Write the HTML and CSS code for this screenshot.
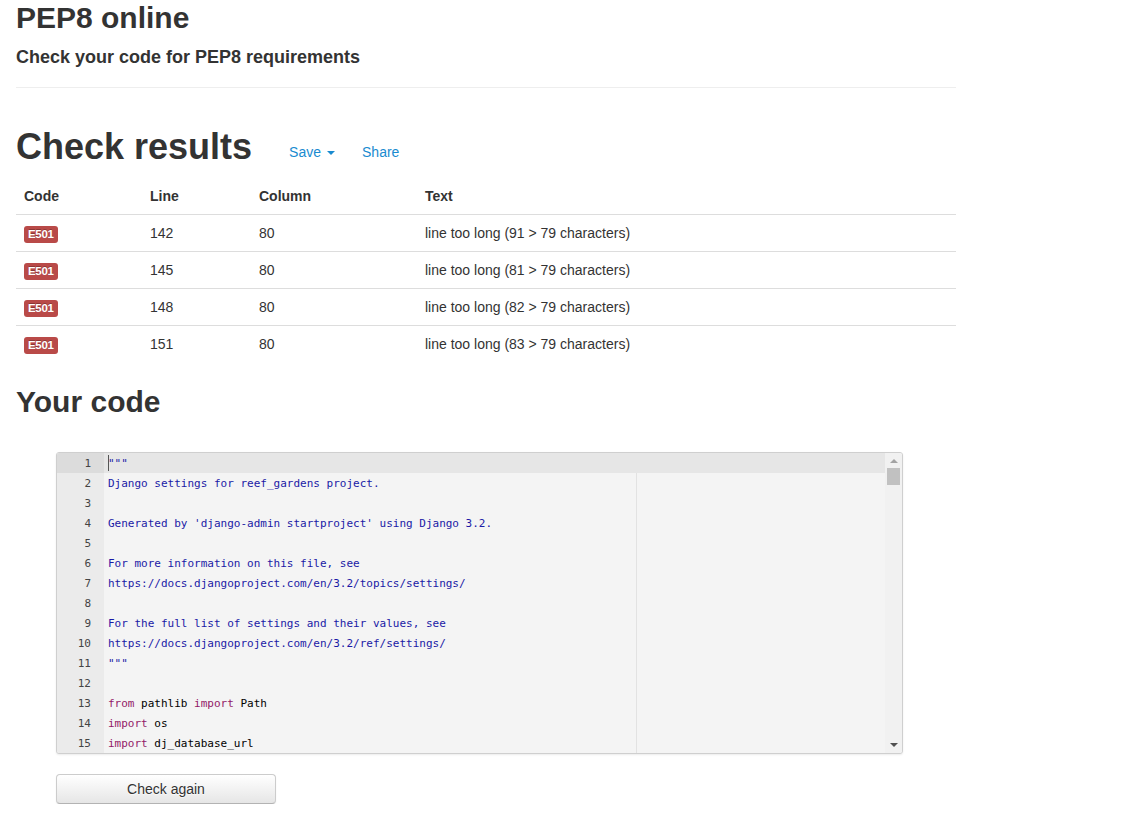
FILE: index.html
```html
<!DOCTYPE html>
<html lang="en">
<head>
<meta charset="utf-8">
<title>PEP8 online</title>
<link rel="stylesheet" href="styles.css">
</head>
<body>
<div class="container">
  <h2 class="site-title">PEP8 online</h2>
  <h4 class="subtitle">Check your code for PEP8 requirements</h4>
  <hr class="divider">

  <div class="results-head">
    <h1 class="results-title">Check results</h1>
    <div class="results-actions">
      <a class="action-link" href="#">Save<span class="caret"></span></a>
      <a class="action-link share" href="#">Share</a>
    </div>
  </div>

  <table class="results-table">
    <thead>
      <tr>
        <th class="col-code">Code</th>
        <th class="col-line">Line</th>
        <th class="col-column">Column</th>
        <th class="col-text">Text</th>
      </tr>
    </thead>
    <tbody>
      <tr><td><span class="label-error">E501</span></td><td>142</td><td>80</td><td>line too long (91 &gt; 79 characters)</td></tr>
      <tr><td><span class="label-error">E501</span></td><td>145</td><td>80</td><td>line too long (81 &gt; 79 characters)</td></tr>
      <tr><td><span class="label-error">E501</span></td><td>148</td><td>80</td><td>line too long (82 &gt; 79 characters)</td></tr>
      <tr><td><span class="label-error">E501</span></td><td>151</td><td>80</td><td>line too long (83 &gt; 79 characters)</td></tr>
    </tbody>
  </table>

  <h2 class="code-title">Your code</h2>

  <div class="code-area">
    <div class="editor">
      <div class="gutter">
        <div class="gutter-cell active">1</div>
        <div class="gutter-cell">2</div>
        <div class="gutter-cell">3</div>
        <div class="gutter-cell">4</div>
        <div class="gutter-cell">5</div>
        <div class="gutter-cell">6</div>
        <div class="gutter-cell">7</div>
        <div class="gutter-cell">8</div>
        <div class="gutter-cell">9</div>
        <div class="gutter-cell">10</div>
        <div class="gutter-cell">11</div>
        <div class="gutter-cell">12</div>
        <div class="gutter-cell">13</div>
        <div class="gutter-cell">14</div>
        <div class="gutter-cell">15</div>
      </div>
      <div class="code">
        <div class="print-margin"></div>
        <div class="code-line active"><span class="cursor"></span><span class="str">"""</span></div>
        <div class="code-line"><span class="str">Django settings for reef_gardens project.</span></div>
        <div class="code-line"></div>
        <div class="code-line"><span class="str">Generated by 'django-admin startproject' using Django 3.2.</span></div>
        <div class="code-line"></div>
        <div class="code-line"><span class="str">For more information on this file, see</span></div>
        <div class="code-line"><span class="str">https://docs.djangoproject.com/en/3.2/topics/settings/</span></div>
        <div class="code-line"></div>
        <div class="code-line"><span class="str">For the full list of settings and their values, see</span></div>
        <div class="code-line"><span class="str">https://docs.djangoproject.com/en/3.2/ref/settings/</span></div>
        <div class="code-line"><span class="str">"""</span></div>
        <div class="code-line"></div>
        <div class="code-line"><span class="kw">from</span> pathlib <span class="kw">import</span> Path</div>
        <div class="code-line"><span class="kw">import</span> os</div>
        <div class="code-line"><span class="kw">import</span> dj_database_url</div>
      </div>
      <div class="scrollbar">
        <span class="arrow-up"></span>
        <span class="thumb"></span>
        <span class="track"></span>
        <span class="arrow-down"></span>
      </div>
    </div>

    <button class="btn-check" type="button">Check again</button>
  </div>
</div>
</body>
</html>
```

FILE: styles.css
```css
html, body {
  margin: 0;
  padding: 0;
  background: #fff;
}

body {
  font-family: "Liberation Sans", Arial, Helvetica, sans-serif;
  font-size: 14px;
  line-height: 20px;
  color: #333;
}

.container {
  width: 940px;
  padding-left: 16px;
}

.site-title {
  margin: 0;
  padding-top: 1px;
  font-size: 30px;
  line-height: 34px;
  font-weight: bold;
  color: #333;
}

.subtitle {
  margin: 12px 0 0;
  font-size: 18px;
  line-height: 20px;
  font-weight: bold;
  color: #333;
}

.divider {
  margin: 20px 0 0;
  border: 0;
  border-top: 1px solid #eee;
  border-bottom: 1px solid #fff;
  height: 0;
}

.results-head {
  display: flex;
  align-items: flex-end;
  margin-top: 38px;
}

.results-title {
  margin: 0;
  font-size: 36px;
  line-height: 40px;
  font-weight: bold;
  color: #333;
}

.results-actions {
  display: flex;
  align-items: center;
  margin-left: 37px;
  margin-bottom: 5px;
}

.action-link {
  color: #1a8bd0;
  text-decoration: none;
  font-size: 14px;
  line-height: 20px;
  display: flex;
  align-items: center;
}

.caret {
  display: inline-block;
  width: 0;
  height: 0;
  margin-left: 6px;
  margin-top: 1px;
  border-top: 4px solid #1a8bd0;
  border-left: 4px solid transparent;
  border-right: 4px solid transparent;
}

.share {
  margin-left: 27px;
}

.results-table {
  width: 940px;
  border-collapse: collapse;
  border-spacing: 0;
  margin-top: 11px;
  margin-bottom: 20px;
}

.results-table th,
.results-table td {
  padding: 8px;
  line-height: 20px;
  text-align: left;
  vertical-align: top;
}

.results-table th {
  font-weight: bold;
  vertical-align: bottom;
}

.results-table td {
  border-top: 1px solid #ddd;
}

.col-code { width: 110px; }
.col-line { width: 93px; }
.col-column { width: 150px; }

.label-error {
  display: inline-block;
  padding: 2px 4px;
  font-size: 11.5px;
  font-weight: bold;
  line-height: 13px;
  color: #fff;
  background-color: #b94a48;
  border-radius: 3px;
  text-shadow: 0 -1px 0 rgba(0, 0, 0, 0.25);
  vertical-align: baseline;
  white-space: nowrap;
  letter-spacing: -0.3px;
}

.code-title {
  margin: 0;
  font-size: 30px;
  line-height: 40px;
  font-weight: bold;
  color: #333;
}

.code-area {
  padding-left: 40px;
  padding-top: 30px;
}

.editor {
  display: flex;
  width: 845px;
  height: 300px;
  border: 1px solid #cfcfcf;
  border-radius: 3px;
  box-shadow: 0 1px 2px rgba(0, 0, 0, 0.08);
  background: #f4f4f4;
  overflow: hidden;
  font-family: "DejaVu Sans Mono", "Liberation Mono", monospace;
  font-size: 11px;
  line-height: 20px;
}

.gutter {
  width: 47px;
  flex: none;
  background: #ebebeb;
  color: #444;
}

.gutter-cell {
  height: 20px;
  text-align: right;
  padding-right: 13px;
  padding-top: 1px;
  box-sizing: border-box;
}

.gutter-cell.active {
  background: #dcdcdc;
}

.code {
  position: relative;
  flex: 1;
  color: #000;
}

.print-margin {
  position: absolute;
  top: 0;
  bottom: 0;
  left: 532px;
  width: 1px;
  background: #e2e2e2;
}

.code-line {
  position: relative;
  height: 20px;
  padding-left: 4px;
  padding-top: 1px;
  box-sizing: border-box;
  white-space: pre;
}

.code-line.active {
  background: #e6e6e6;
}

.cursor {
  position: absolute;
  left: 4px;
  top: 2px;
  width: 1px;
  height: 16px;
  background: #555;
}

.str { color: #1a1aa6; }
.kw { color: #931a68; }

.scrollbar {
  width: 17px;
  flex: none;
  background: #f1f1f1;
  display: flex;
  flex-direction: column;
  align-items: center;
}

.arrow-up {
  margin-top: 6px;
  width: 0;
  height: 0;
  border-bottom: 4px solid #a3a3a3;
  border-left: 4px solid transparent;
  border-right: 4px solid transparent;
}

.thumb {
  margin-top: 5px;
  width: 13px;
  height: 17px;
  background: #c1c1c1;
}

.track {
  flex: 1;
}

.arrow-down {
  margin-bottom: 6px;
  width: 0;
  height: 0;
  border-top: 4px solid #505050;
  border-left: 4px solid transparent;
  border-right: 4px solid transparent;
}

.btn-check {
  display: block;
  margin-top: 20px;
  width: 220px;
  height: 30px;
  padding: 4px 12px;
  font-family: "Liberation Sans", Arial, Helvetica, sans-serif;
  font-size: 14px;
  line-height: 20px;
  color: #333;
  background-color: #f5f5f5;
  background-image: linear-gradient(to bottom, #ffffff, #e6e6e6);
  border: 1px solid #cccccc;
  border-bottom-color: #b3b3b3;
  border-radius: 4px;
  box-shadow: inset 0 1px 0 rgba(255, 255, 255, 0.2), 0 1px 2px rgba(0, 0, 0, 0.05);
  text-shadow: 0 1px 1px rgba(255, 255, 255, 0.75);
  cursor: pointer;
}
```
